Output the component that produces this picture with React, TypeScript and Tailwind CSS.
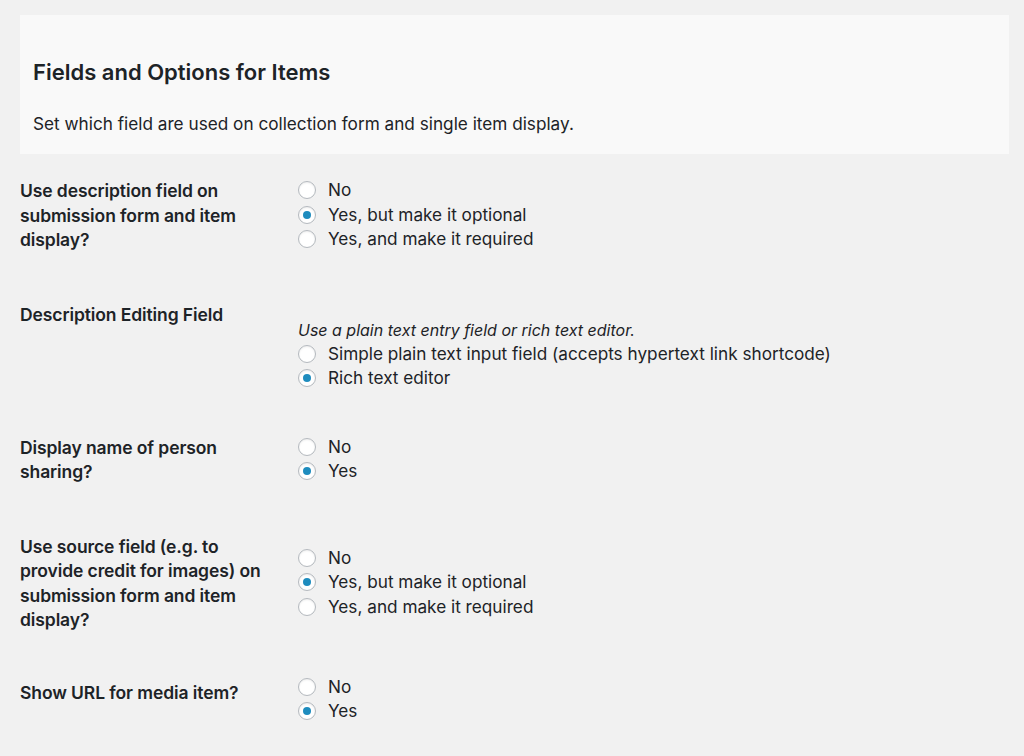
import React from 'react';

type Option = { label: string; checked?: boolean };

interface FieldRow {
  label: string;
  options: Option[];
  description?: string;
  rowPad: string;
  optPad: string;
}

const rows: FieldRow[] = [
  {
    label: 'Use description field on submission form and item display?',
    options: [{ label: 'No' }, { label: 'Yes, but make it optional', checked: true }, { label: 'Yes, and make it required' }],
    rowPad: 'pt-[25px]',
    optPad: '-mt-[1px]',
  },
  {
    label: 'Description Editing Field',
    description: 'Use a plain text entry field or rich text editor.',
    options: [
      { label: 'Simple plain text input field (accepts hypertext link shortcode)' },
      { label: 'Rich text editor', checked: true },
    ],
    rowPad: 'pt-[50px]',
    optPad: 'mt-[16px]',
  },
  {
    label: 'Display name of person sharing?',
    options: [{ label: 'No' }, { label: 'Yes', checked: true }],
    rowPad: 'pt-[45px]',
    optPad: '-mt-[1px]',
  },
  {
    label: 'Use source field (e.g. to provide credit for images) on submission form and item display?',
    options: [{ label: 'No' }, { label: 'Yes, but make it optional', checked: true }, { label: 'Yes, and make it required' }],
    rowPad: 'pt-[50px]',
    optPad: 'mt-[11px]',
  },
  {
    label: 'Show URL for media item?',
    options: [{ label: 'No' }, { label: 'Yes', checked: true }],
    rowPad: 'pt-[48px]',
    optPad: '-mt-[6px]',
  },
];

const Radio: React.FC<{ checked?: boolean }> = ({ checked }) => (
  <span className="flex h-[18px] w-[18px] shrink-0 items-center justify-center rounded-full border border-[#b4b9be] bg-white shadow-[inset_0_1px_2px_rgba(0,0,0,0.08)]">
    {checked && <span className="h-[8px] w-[8px] rounded-full bg-[#1e8cbe]" />}
  </span>
);

const App: React.FC = () => {
  return (
    <div
      className="min-h-[756px] bg-[#f1f1f1] pt-[15px] pb-[40px] text-[#1d2327]"
      style={{ fontFamily: 'Inter, "Noto Sans", sans-serif' }}
    >
      <div className="ml-[20px] w-[989px] bg-[#f9f9f9] pt-[45px] pb-[18px] pl-[13px]">
        <h2 className="text-[22px] leading-[24px] font-semibold">Fields and Options for Items</h2>
        <p className="mt-[28px] text-[17.2px] leading-[24px]">
          Set which field are used on collection form and single item display.
        </p>
      </div>

      {rows.map((row) => (
        <div key={row.label} className={`flex items-start ${row.rowPad}`}>
          <div className="w-[298px] shrink-0 pl-[20px] pr-[28px] text-[17.5px] leading-[24.5px] font-semibold tracking-[-0.1px]">
            {row.label}
          </div>
          <div className={row.optPad}>
            {row.description && (
              <p className="text-[16px] leading-[23px] italic">{row.description}</p>
            )}
            {row.options.map((opt) => (
              <label key={opt.label} className="flex h-[24.5px] items-center text-[17.2px]">
                <Radio checked={opt.checked} />
                <span className="ml-[12px]">{opt.label}</span>
              </label>
            ))}
          </div>
        </div>
      ))}
    </div>
  );
};

export default App;
